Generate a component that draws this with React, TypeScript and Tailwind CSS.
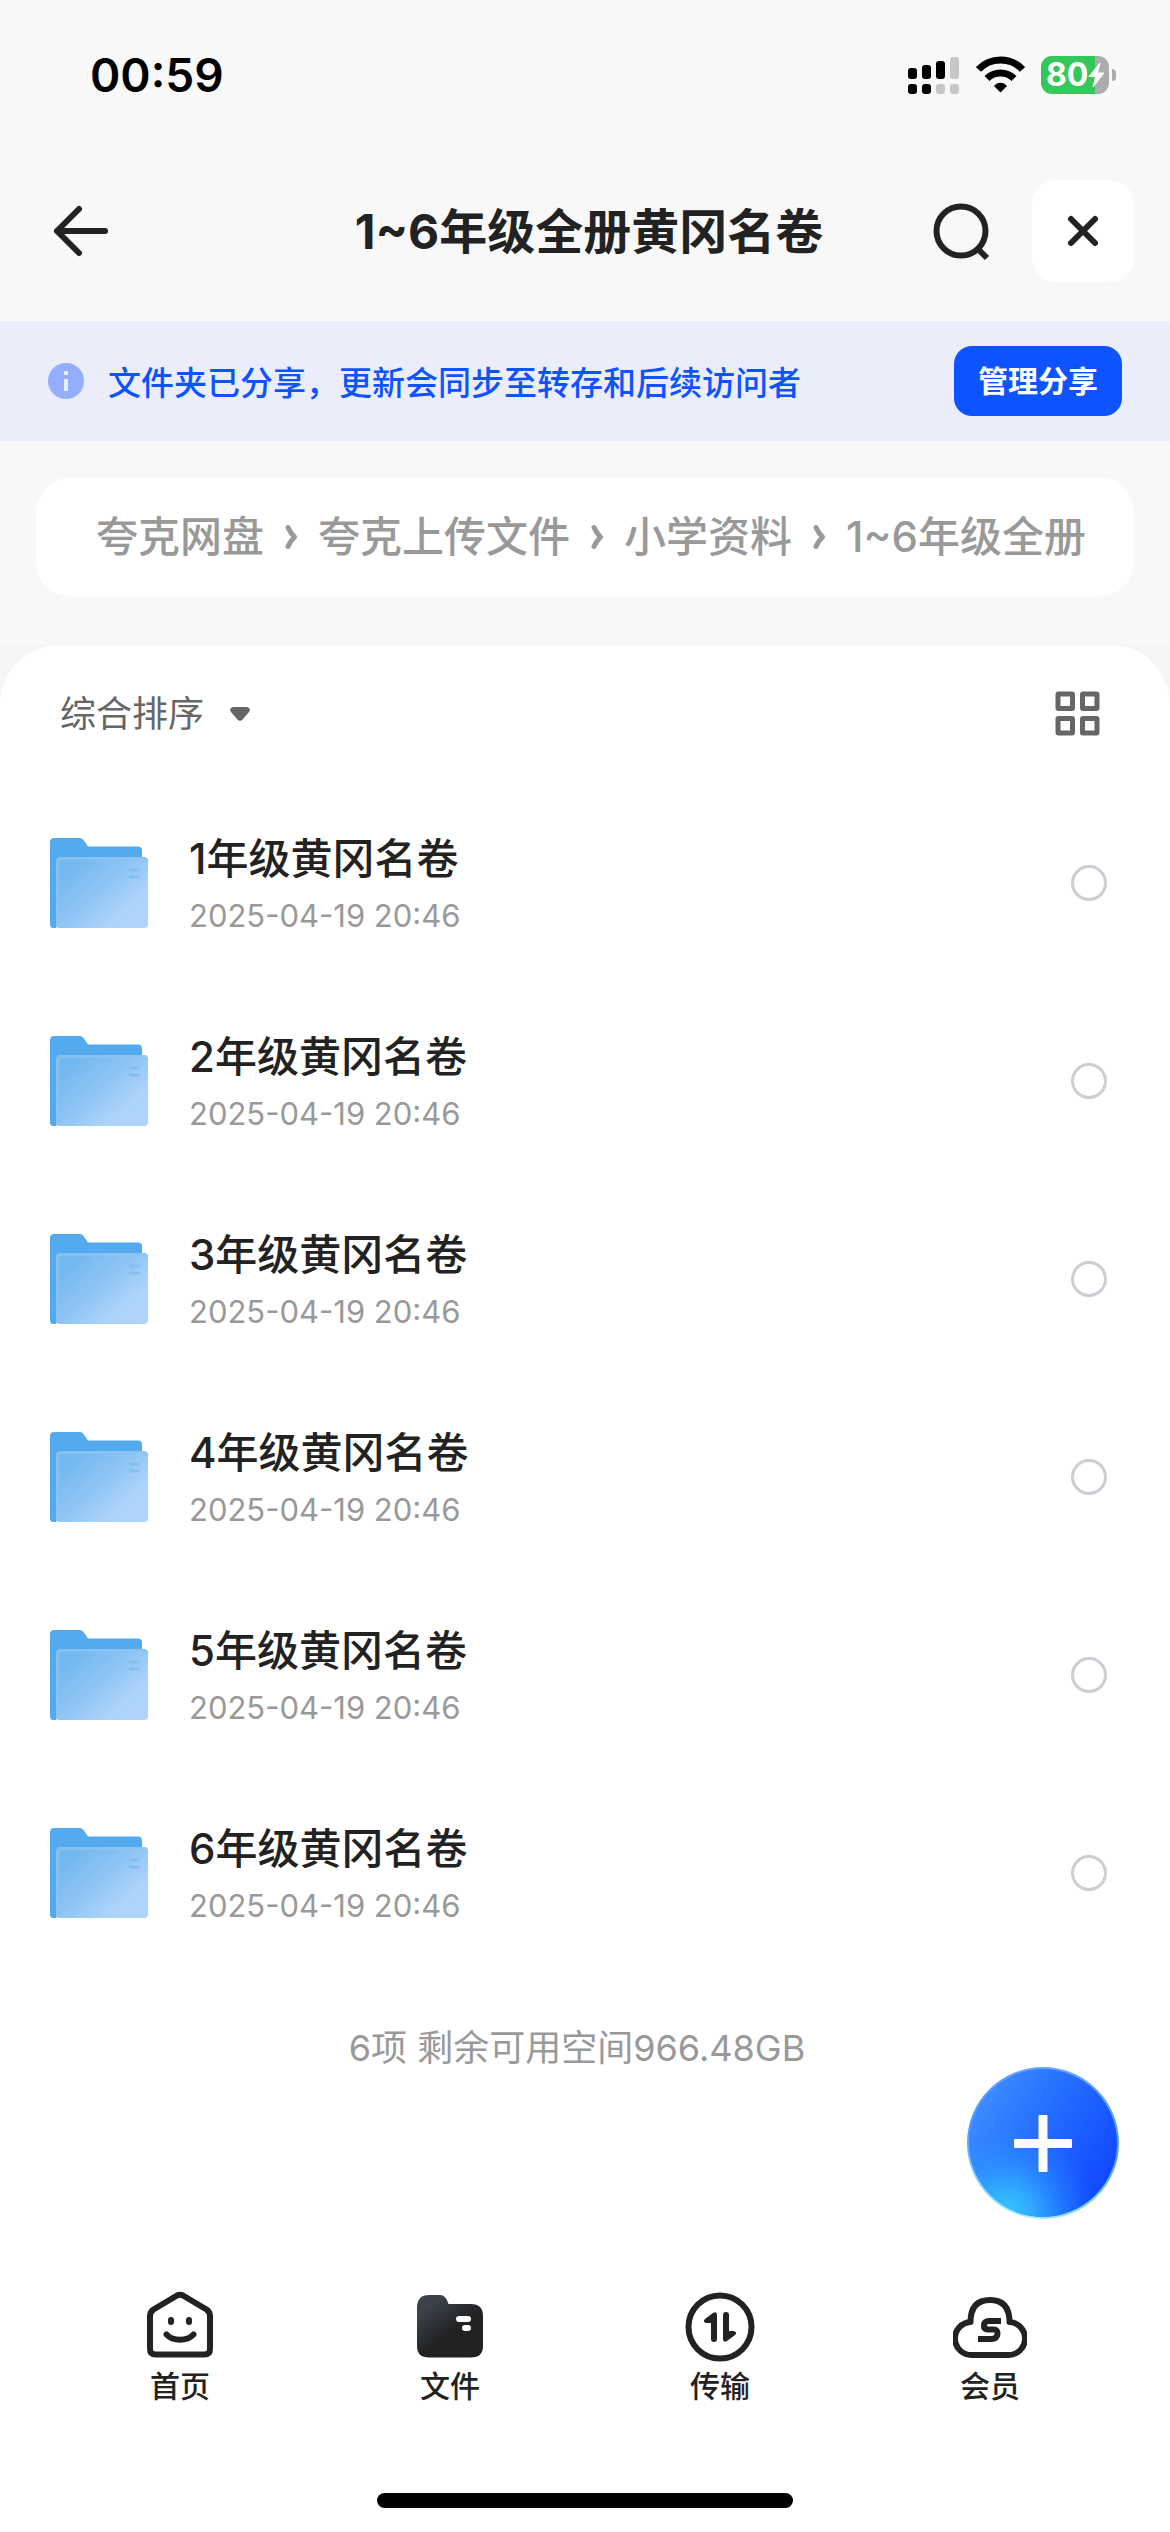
const folders = [
  { name: "1年级黄冈名卷", date: "2025-04-19 20:46" },
  { name: "2年级黄冈名卷", date: "2025-04-19 20:46" },
  { name: "3年级黄冈名卷", date: "2025-04-19 20:46" },
  { name: "4年级黄冈名卷", date: "2025-04-19 20:46" },
  { name: "5年级黄冈名卷", date: "2025-04-19 20:46" },
  { name: "6年级黄冈名卷", date: "2025-04-19 20:46" },
];

const crumbs = ["夸克网盘", "夸克上传文件", "小学资料", "1~6年级全册"];

function StatusBar() {
  return (
    <div className="flex h-[150px] items-center justify-between pr-[54px] pl-[90px]">
      <span className="text-[46px] leading-[56px] font-semibold text-black">00:59</span>
      <div className="flex items-center gap-4">
        <svg width="52" height="38" viewBox="0 0 52 38" aria-hidden="true">
          <g fill="#000">
            <rect x="0" y="12" width="9" height="11" rx="3" />
            <rect x="14" y="9" width="9" height="14" rx="3" />
            <rect x="28" y="5" width="9" height="18" rx="3" />
            <rect x="0" y="28" width="9" height="10" rx="3" />
            <rect x="14" y="28" width="9" height="10" rx="3" />
          </g>
          <g fill="#c6c6c6">
            <rect x="42" y="1" width="9" height="22" rx="3" />
            <rect x="28" y="28" width="9" height="10" rx="3" />
            <rect x="42" y="28" width="9" height="10" rx="3" />
          </g>
        </svg>
        <svg width="49" height="38" viewBox="0 0 49 38" aria-hidden="true">
          <g fill="none" stroke="#000" strokeWidth="7">
            <path d="M2.5 13.5C8 7.5 16 4 24.5 4S41 7.5 46.5 13.5" />
            <path d="M11 22.5C14.5 19 19 17 24.5 17S34.5 19 38 22.5" />
          </g>
          <path d="M24.5 36.5L18 30C21 25.5 28 25.5 31 30Z" fill="#000" />
        </svg>
        <div className="flex items-center gap-[3px]">
          <div className="flex h-[38px] w-[68px] items-center overflow-hidden rounded-[11px] bg-linear-to-r from-[#34c759] from-79% to-[#acacac] to-79% pl-[5px]">
            <span className="text-[32px] leading-[38px] font-bold text-white">80</span>
            <svg width="17" height="26" viewBox="0 0 17 26" aria-hidden="true">
              <path d="M12 1L1 14.5H7.5L5 25L16 11H9.5Z" fill="#fff" stroke="#fff" strokeLinejoin="round" />
            </svg>
          </div>
          <div className="h-3 w-1 rounded-r-full bg-[#acacac]"></div>
        </div>
      </div>
    </div>
  );
}

function Header() {
  return (
    <header className="flex h-[171px] items-start pt-[30px] pr-9 pl-12">
      <button type="button" aria-label="返回" className="flex h-[102px] w-[248px] items-center">
        <svg width="66" height="60" viewBox="0 0 66 60" fill="none" stroke="#222" strokeWidth="6" strokeLinecap="round" strokeLinejoin="round">
          <path d="M57 30H9M31 8L9 30L31 52" />
        </svg>
      </button>
      <h1 className="flex-1 text-center text-[48px] leading-[104px] font-bold whitespace-nowrap text-[#222]">1~6年级全册黄冈名卷</h1>
      <div className="flex w-[252px] items-center justify-end gap-[42px]">
        <button type="button" aria-label="搜索">
          <svg width="60" height="60" viewBox="0 0 60 60" fill="none" stroke="#222" strokeWidth="6">
            <circle cx="31" cy="30" r="24.5" />
            <path d="M47 47L57 57" />
          </svg>
        </button>
        <button type="button" aria-label="关闭" className="flex size-[102px] items-center justify-center rounded-3xl bg-white">
          <svg width="36" height="36" viewBox="0 0 36 36" fill="none" stroke="#222" strokeWidth="6" strokeLinecap="round">
            <path d="M6 6L30 30M30 6L6 30" />
          </svg>
        </button>
      </div>
    </header>
  );
}

function ShareNotice() {
  return (
    <div className="flex h-[120px] items-center bg-[#ebeefa] px-12">
      <svg width="36" height="36" viewBox="0 0 36 36" aria-hidden="true">
        <circle cx="18" cy="18" r="18" fill="#94aeff" />
        <path d="M16 8h4v4h-4zM16 16h4v12h-4z" fill="#ebeefa" />
      </svg>
      <p className="ml-6 flex-1 pt-1 text-[33px] leading-[48px] font-medium text-[#0d53ff]">文件夹已分享，更新会同步至转存和后续访问者</p>
      <button type="button" className="h-[70px] rounded-[18px] bg-[#0d53ff] px-6 text-[30px] leading-[42px] font-bold text-white">管理分享</button>
    </div>
  );
}

function Breadcrumb() {
  return (
    <nav aria-label="路径" className="mx-9 my-9 rounded-[36px] bg-white px-[60px]">
      <ol className="flex h-[120px] items-center gap-5 whitespace-nowrap">
        {crumbs.map((crumb, i) => (
          <li key={crumb} className="flex items-center gap-5">
            {i > 0 && (
              <svg width="14" height="26" viewBox="0 0 14 26" fill="none" stroke="#999" strokeWidth="5" strokeLinecap="round" strokeLinejoin="round" aria-hidden="true">
                <path d="M4 3.5C6 8 8 10.5 10.5 13C8 15.5 6 18 4 22.5" />
              </svg>
            )}
            <a href="#" className="text-[42px] leading-[60px] font-medium text-[#999]">{crumb}</a>
          </li>
        ))}
      </ol>
    </nav>
  );
}

function FolderIcon() {
  return (
    <svg width="98" height="90" viewBox="0 0 98 90" aria-hidden="true">
      <defs>
        <linearGradient id="folderFront" x1="0.1" y1="0.2" x2="0.9" y2="0.9">
          <stop offset="0" stopColor="#73b8ef" />
          <stop offset="0.45" stopColor="#90c5f5" />
          <stop offset="0.8" stopColor="#add4f9" />
          <stop offset="1" stopColor="#afd4fa" />
        </linearGradient>
      </defs>
      <path d="M0 4Q0 0 4 0H30Q32 0 33.5 2L38 8.5H88Q92 8.5 92 12.5V60H20L6 90H3Q0 90 0 86Z" fill="#54aaee" />
      <rect x="6" y="19" width="92" height="71" rx="4" fill="url(#folderFront)" />
      <path d="M7.5 89V24Q7.5 20.5 11 20.5H94Q96.5 20.5 96.5 24" fill="none" stroke="#8cc5f5" strokeWidth="3" opacity="0.7" />
      <path d="M79 30.5h10.5v3h-10.5zM79 37.5h10.5v3h-10.5z" fill="#83bff4" />
    </svg>
  );
}

function FileList() {
  return (
    <ul className="mt-2">
      {folders.map((folder, i) => (
        <li key={folder.name}>
          <label htmlFor={`folder-${i}`} className="flex h-[198px] items-center pr-[63px] pl-[50px]">
            <FolderIcon />
            <span className="ml-[41px] flex flex-1 flex-col">
              <span className="text-[42px] leading-[60px] font-medium text-[#222]">{folder.name}</span>
              <span className="mt-[6px] text-[31px] leading-[42px] text-[#999]">{folder.date}</span>
            </span>
            <input id={`folder-${i}`} type="checkbox" className="size-9 appearance-none rounded-full border-[3px] border-[#cdcdd4] checked:border-[#0d53ff] checked:bg-[#0d53ff]" />
          </label>
        </li>
      ))}
    </ul>
  );
}

function HomeIcon() {
  return (
    <svg width="72" height="72" viewBox="0 0 72 72" fill="none" stroke="#222" strokeWidth="6" strokeLinecap="round" strokeLinejoin="round">
      <path d="M33 5.5Q36 4 39 5.5L62.5 19.5Q66 22 66 26V59Q66 64.5 60.5 64.5H11.5Q6 64.5 6 59V26Q6 22 9.5 19.5Z" />
      <path d="M27 30V32M45 30V32M22.5 44.5C29 51.5 43 51.5 49.5 44.5" />
    </svg>
  );
}

function FilesIcon() {
  return (
    <svg width="72" height="72" viewBox="0 0 72 72">
      <defs>
        <linearGradient id="tabFolder" x1="0.1" y1="0.1" x2="0.5" y2="0.6">
          <stop offset="0.2" stopColor="#3b424b" />
          <stop offset="1" stopColor="#222" />
        </linearGradient>
      </defs>
      <path d="M3 18Q3 5 15 5H26Q32 5 34.5 14H57Q69 14 69 26V56Q69 67.5 57 67.5H15Q3 67.5 3 56Z" fill="url(#tabFolder)" />
      <rect x="42" y="26" width="15" height="6" rx="3" fill="#fff" />
      <rect x="48" y="35" width="9" height="6" rx="3" fill="#fff" />
    </svg>
  );
}

function TransferIcon() {
  return (
    <svg width="72" height="72" viewBox="0 0 72 72">
      <circle cx="36" cy="37" r="31.5" fill="none" stroke="#222" strokeWidth="6" />
      <path d="M33 25V49Q33 52 30 52T27 49V33H22.5Q18 32 21 29L29 23Q33 21 33 25Z" fill="#222" />
      <path d="M39 49V25Q39 22 42 22T45 25V41H49.5Q54 42 51 45L43 51Q39 53 39 49Z" fill="#222" />
    </svg>
  );
}

function MemberIcon() {
  return (
    <svg width="74" height="72" viewBox="0 0 74 72">
      <path d="M17.5 32Q17.500 10 37 10Q56.5 10 56.5 32A16.5 16.5 0 0 1 54.5 65H19.5A16.5 16.5 0 0 1 17.5 32Z" fill="none" stroke="#222" strokeWidth="6" strokeLinejoin="round" />
      <path d="M48 31H36Q31.500 31 31 35T34.5 39.5H40.5Q45 39.5 44.5 44T39 49H25" fill="none" stroke="#222" strokeWidth="6" />
    </svg>
  );
}

function TabBar() {
  const tabs = [
    { label: "首页", icon: <HomeIcon /> },
    { label: "文件", icon: <FilesIcon /> },
    { label: "传输", icon: <TransferIcon /> },
    { label: "会员", icon: <MemberIcon /> },
  ];
  return (
    <nav className="flex px-[45px]">
      {tabs.map((tab) => (
        <a key={tab.label} href="#" className="flex flex-1 flex-col items-center gap-[3px]">
          {tab.icon}
          <span className="text-[30px] leading-[42px] font-medium text-[#222]">{tab.label}</span>
        </a>
      ))}
    </nav>
  );
}

function App() {
  return (
    <div className="flex min-h-screen flex-col bg-[#f8f8f8] font-['Inter','Noto_Sans_CJK_SC',sans-serif]">
      <StatusBar />
      <Header />
      <ShareNotice />
      <Breadcrumb />
      <div className="mt-3 flex flex-1 flex-col bg-[#f5f6f8]">
        <main className="flex flex-1 flex-col rounded-t-[60px] bg-white">
          <div className="flex h-[131px] items-center justify-between pt-[6px] pr-[70px] pl-[60px]">
            <button type="button" className="flex items-center gap-[26px] text-[36px] leading-[54px] text-[#666]">
              综合排序
              <svg width="20" height="14" viewBox="0 0 20 14" aria-hidden="true">
                <path d="M3 0H17Q21.5 1 19 5L12.5 12.5Q10 15 7.5 12.5L1 5Q-1.5 1 3 0Z" fill="#666" />
              </svg>
            </button>
            <button type="button" aria-label="网格视图">
              <svg width="45" height="45" viewBox="0 0 45 45" fill="none" stroke="#666" strokeWidth="5">
                <rect x="3" y="3" width="14.5" height="14.5" rx="0.5" />
                <rect x="27.5" y="3" width="14.5" height="14.5" rx="0.5" />
                <rect x="3" y="27.5" width="14.5" height="14.5" rx="0.5" />
                <rect x="27.5" y="27.5" width="14.5" height="14.5" rx="0.5" />
              </svg>
            </button>
          </div>
          <FileList />
          <div className="relative h-[318px]">
            <p className="pt-[49px] pr-4 text-center text-[36px] leading-[54px] text-[#999]">6项 剩余可用空间966.48GB</p>
            <button type="button" aria-label="新建" className="absolute top-[94px] right-[50px]">
              <svg width="154" height="154" viewBox="0 0 154 154">
                <defs>
                  <linearGradient id="fabBase" x1="0.1" y1="0.2" x2="0.95" y2="0.7">
                    <stop offset="0" stopColor="#3d8aff" />
                    <stop offset="0.5" stopColor="#2269ff" />
                    <stop offset="1" stopColor="#124aff" />
                  </linearGradient>
                  <radialGradient id="fabGlow" cx="0.25" cy="1" r="0.6">
                    <stop offset="0" stopColor="#3accff" />
                    <stop offset="0.3" stopColor="#34b8ff" stopOpacity="0.85" />
                    <stop offset="1" stopColor="#248cff" stopOpacity="0" />
                  </radialGradient>
                  <linearGradient id="fabRim" x1="0.6" y1="0" x2="0.4" y2="1">
                    <stop offset="0" stopColor="#6aa4fa" />
                    <stop offset="0.5" stopColor="#4d9bff" />
                    <stop offset="1" stopColor="#9df0ff" />
                  </linearGradient>
                </defs>
                <circle cx="77" cy="77" r="76" fill="url(#fabRim)" />
                <circle cx="77" cy="77" r="74" fill="url(#fabBase)" />
                <circle cx="77" cy="77" r="74" fill="url(#fabGlow)" />
                <rect x="48" y="73" width="58" height="9" rx="1" fill="#fff" />
                <rect x="72.5" y="49" width="9" height="57" rx="1" fill="#fff" />
              </svg>
            </button>
          </div>
          <TabBar />
          <div className="mx-auto mt-auto mb-6 h-[15px] w-[416px] rounded-full bg-black"></div>
        </main>
      </div>
    </div>
  );
}

export default App;
